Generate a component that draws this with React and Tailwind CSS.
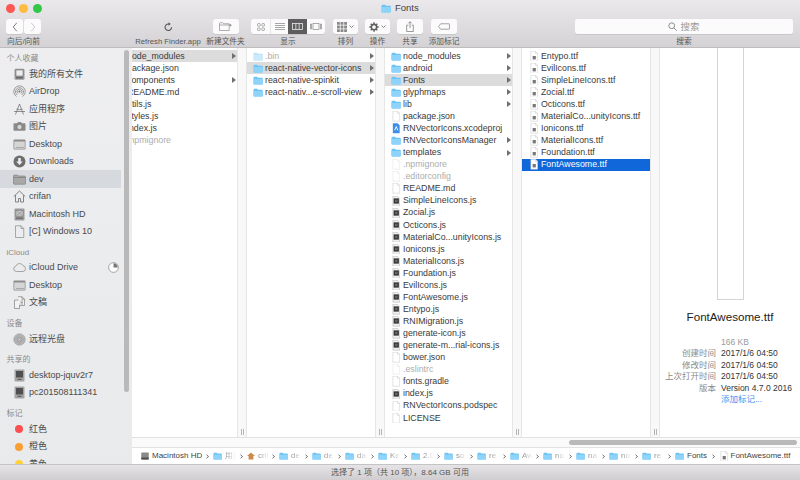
import React from 'react';

const FONT = "font-['Liberation_Sans','Noto_Sans_CJK_SC',sans-serif]";

const Folder = ({ className = 'w-[10px] h-[9px]', dim }) => (
  <svg viewBox="0 0 20 17" className={className} style={{ opacity: dim ? 0.45 : 1 }}>
    <path d="M1 3q0-2 2-2h5l2 2h8q1.500 0 1.500 1.500V15q0 1.500-1.500 1.500H2.500Q1 16.500 1 15z" fill="#6cc3f5" />
    <path d="M1 5.500h18.500V15q0 1.500-1.500 1.500H2.500Q1 16.500 1 15z" fill="#8ed4fa" />
  </svg>
);

const Doc = ({ dim, children }) => (
  <svg viewBox="0 0 16 20" className="w-[8.500px] h-[10.500px]" style={{ opacity: dim ? 0.5 : 1 }}>
    <path d="M1.500 0.500h9l4 4v15h-13z" fill="#fff" stroke="#c9c9c9" />
    <path d="M10.500 0.500v4h4" fill="none" stroke="#c9c9c9" />
    {children}
  </svg>
);

const JsFile = () => (
  <svg viewBox="0 0 16 20" className="w-[8.500px] h-[10.500px]">
    <path d="M1.500 0.500h9l4 4v15h-13z" fill="#f0f0f0" stroke="#b5b5b5" />
    <rect x="3" y="4.500" width="10" height="10" fill="#333" />
    <rect x="5.500" y="7" width="5" height="5" fill="#666" />
  </svg>
);

const TtfFile = () => (
  <Doc>
    <rect x="5" y="9.500" width="6" height="6.500" fill="#777" />
  </Doc>
);

const Xcode = () => (
  <svg viewBox="0 0 16 20" className="w-[8.500px] h-[10.500px]">
    <path d="M1.500 0.500h9l4 4v15h-13z" fill="#3d8ee8" />
    <path d="M8 5l4 9h-1.800L8 9l-2.200 5H4z" fill="#fff" />
  </svg>
);

const Arrow = () => <span className="w-0 h-0 border-y-[3px] border-y-transparent border-l-[4px] border-l-[#6f6f6f]" />;

const Row = ({ name, kind, arrow, dim, selected, blue, pad = 'pl-1', cut }) => {
  const bg = blue ? 'bg-[#0f67d9]' : selected ? 'bg-[#dcdcdc]' : '';
  const color = blue ? 'text-white' : dim ? 'text-[#adadad]' : 'text-[#3a3a3a]';
  return (
    <div className={`h-[12.07px] flex items-center ${pad} pr-[1.500px] ${bg}`}>
      {!cut && (
        <span className="w-[14px] flex justify-center shrink-0">
          {kind === 'folder' && <Folder dim={dim} />}
          {kind === 'doc' && <Doc dim={dim} />}
          {kind === 'js' && <JsFile />}
          {kind === 'ttf' && <TtfFile />}
          {kind === 'xcode' && <Xcode />}
        </span>
      )}
      <span className={`flex-1 min-w-0 whitespace-nowrap text-[8.800px] leading-none ${cut ? '-ml-[5px]' : ''} ${color}`}>{name}</span>
      {arrow && <Arrow />}
    </div>
  );
};

const Gutter = () => (
  <div className="w-[10px] shrink-0 bg-[#f8f8f8] border-x border-[#e6e6e6] flex items-end justify-center pb-[2px]">
    <span className="w-[3px] h-[6px] border-x border-[#b5b5b5]" />
  </div>
);

const col3 = [
  ['node_modules', 'folder', 1], ['android', 'folder', 1], ['Fonts', 'folder', 1, 0, 1], ['glyphmaps', 'folder', 1], ['lib', 'folder', 1],
  ['package.json', 'doc'], ['RNVectorIcons.xcodeproj', 'xcode'], ['RNVectorIconsManager', 'folder', 1], ['templates', 'folder', 1],
  ['.npmignore', 'doc', 0, 1], ['.editorconfig', 'doc', 0, 1], ['README.md', 'doc'], ['SimpleLineIcons.js', 'js'], ['Zocial.js', 'js'],
  ['Octicons.js', 'js'], ['MaterialCo...unityIcons.js', 'js'], ['Ionicons.js', 'js'], ['MaterialIcons.js', 'js'], ['Foundation.js', 'js'],
  ['EvilIcons.js', 'js'], ['FontAwesome.js', 'js'], ['Entypo.js', 'js'], ['RNIMigration.js', 'js'], ['generate-icon.js', 'js'],
  ['generate-m...rial-icons.js', 'js'], ['bower.json', 'doc'], ['.eslintrc', 'doc', 0, 1], ['fonts.gradle', 'doc'], ['index.js', 'js'],
  ['RNVectorIcons.podspec', 'doc'], ['LICENSE', 'doc'],
];

const col4 = ['Entypo.ttf', 'EvilIcons.ttf', 'SimpleLineIcons.ttf', 'Zocial.ttf', 'Octicons.ttf', 'MaterialCo...unityIcons.ttf', 'Ionicons.ttf', 'MaterialIcons.ttf', 'Foundation.ttf'];

const G = '#7f7f7f';

const sidebarIcons = {
  all: (
    <svg viewBox="0 0 26 26" className="w-[13px] h-[13px]">
      <rect x="3" y="1.500" width="20" height="22" rx="2.500" fill="#9a9a9a" />
      <rect x="6" y="4" width="14" height="12" fill="#ececec" stroke="#666" />
      <rect x="6" y="18" width="14" height="3" fill="#666" />
    </svg>
  ),
  airdrop: (
    <svg viewBox="0 0 26 26" className="w-[13px] h-[13px]" fill="none" stroke={G} strokeWidth="1.500">
      <path d="M7 23A11.500 11.500 0 1 1 19 23" />
      <path d="M8.500 20A8 8 0 1 1 17.500 20" />
      <path d="M10 17A4.800 4.800 0 1 1 16 17" />
      <circle cx="13" cy="13" r="1.500" fill={G} />
    </svg>
  ),
  apps: (
    <svg viewBox="0 0 26 26" className="w-[13px] h-[13px]" fill="none" stroke="#707070" strokeWidth="1.500">
      <path d="M13 2L5 23M13 2l8 21M2 17h22M7 12q6 3 12 0" />
    </svg>
  ),
  photos: (
    <svg viewBox="0 0 26 26" className="w-[13px] h-[13px]">
      <path d="M1 8q0-1.500 1.500-1.500H8L10 4h6l2 2.500h5.500Q25 6.500 25 8v12q0 1.500-1.500 1.500h-21Q1 21.500 1 20z" fill="#8a8a8a" />
      <circle cx="13" cy="14" r="5" fill="#d8d8d8" stroke="#666" />
    </svg>
  ),
  desktop: (
    <svg viewBox="0 0 26 26" className="w-[13px] h-[13px]">
      <rect x="1" y="3" width="24" height="20" rx="2" fill="#8c8c8c" />
      <rect x="2.500" y="7" width="21" height="14.500" fill="#d5d5d5" />
      <path d="M7 19h2M11 19h2M15 19h2M19 19h2" stroke="#666" strokeWidth="1.500" />
    </svg>
  ),
  downloads: (
    <svg viewBox="0 0 26 26" className="w-[13px] h-[13px]">
      <circle cx="13" cy="13" r="12" fill="#6e6e6e" />
      <path d="M10.500 6h5v7h4L13 20l-6.500-7h4z" fill="#f0f0f0" />
    </svg>
  ),
  folder: (
    <svg viewBox="0 0 26 26" className="w-[13px] h-[13px]">
      <path d="M1 6q0-2 2-2h6l2 2h12q2 0 2 2v13q0 1.500-1.500 1.500h-21Q1 22.500 1 21z" fill="#a8a8a8" stroke="#6a6a6a" />
      <path d="M1.500 9h23" stroke="#6a6a6a" />
    </svg>
  ),
  home: (
    <svg viewBox="0 0 26 26" className="w-[13px] h-[13px]" fill="none" stroke="#6a6a6a" strokeWidth="1.600">
      <path d="M1.500 13L13 2l11.500 11M5 10.500V24h6v-7h4v7h6V10.500" />
    </svg>
  ),
  hd: (
    <svg viewBox="0 0 26 26" className="w-[13px] h-[13px]">
      <rect x="3" y="1" width="20" height="24" rx="2" fill="#9c9c9c" />
      <rect x="6" y="5" width="14" height="11" fill="#c9c9c9" stroke="#777" />
      <path d="M8 7l10 7M18 7L8 14" stroke="#777" />
      <rect x="6" y="19" width="14" height="3" fill="#6f6f6f" />
    </svg>
  ),
  doc: (
    <svg viewBox="0 0 26 26" className="w-[13px] h-[13px]" fill="none" stroke="#8a8a8a" strokeWidth="1.400">
      <path d="M5 1.500h11l5.500 5.500v18H5zM16 1.500V7h5.500" />
    </svg>
  ),
  cloud: (
    <svg viewBox="0 0 26 26" className="w-[13px] h-[13px]">
      <path d="M7 21a5.500 5.500 0 0 1-1-10.900A7.500 7.500 0 0 1 20 9.500 5.800 5.800 0 0 1 20 21z" fill="#ececec" stroke="#7f7f7f" strokeWidth="1.300" />
    </svg>
  ),
  docs: (
    <svg viewBox="0 0 26 26" className="w-[13px] h-[13px]" fill="none" stroke="#808080" strokeWidth="1.400">
      <path d="M3 8h10v17H3z" fill="#f2f2f2" />
      <path d="M10 1.500h8l5 5V19h-10M18 1.500v5h5" fill="#f2f2f2" />
      <path d="M15 10h5M15 13h5M15 16h5" />
    </svg>
  ),
  disc: (
    <svg viewBox="0 0 26 26" className="w-[13px] h-[13px]" fill="none">
      <circle cx="13" cy="13" r="11.500" fill="#b8b8b8" stroke="#8d8d8d" />
      <circle cx="13" cy="13" r="8" stroke="#9c9c9c" />
      <circle cx="13" cy="13" r="5" stroke="#8d8d8d" />
      <circle cx="13" cy="13" r="2" fill="#eee" stroke="#777" />
    </svg>
  ),
  monitor: (
    <svg viewBox="0 0 26 26" className="w-[13px] h-[13px]">
      <rect x="3" y="1" width="20" height="24" rx="2" fill="#a4a4a4" />
      <rect x="6" y="4" width="14" height="13" fill="#4f4f4f" />
      <rect x="9" y="19.500" width="8" height="2.500" fill="#5f5f5f" />
    </svg>
  ),
};

const SideHead = ({ children, first }) => (
  <div className={`${first ? 'mt-[4.500px]' : 'mt-[6px]'} h-[12.750px] pl-[6.500px] flex items-center text-[8px] leading-none text-[#8a8a8a]`}>{children}</div>
);

const SideItem = ({ icon, label, active, tag, right }) => (
  <div className={`h-[17.500px] w-[121px] flex items-center pl-[12px] text-[9px] leading-none text-[#4a4a4a] whitespace-nowrap ${active ? 'bg-[#d6d9de]' : ''}`}>
    <span className="w-[14px] h-[13px] flex items-center justify-center shrink-0">
      {tag ? <span className={`w-[8px] h-[8px] rounded-full ${tag}`} /> : sidebarIcons[icon]}
    </span>
    <span className="ml-[3px] flex-1">{label}</span>
    {right}
  </div>
);

const Btn = ({ className = '', children }) => (
  <div className={`h-[15px] rounded-[2.500px] bg-[#fbfbfb] shadow-[0_0.5px_0.5px_#b5b5b5] flex items-center justify-center ${className}`}>{children}</div>
);

const ToolItem = ({ w, ml, label, children }) => (
  <div className={`flex flex-col items-center shrink-0 ${w} ${ml}`}>
    {children}
    <div className="mt-[3px] text-[7.700px] leading-[10px] text-[#555] whitespace-nowrap">{label}</div>
  </div>
);

const Chevron = ({ dir, color }) => (
  <svg viewBox="0 0 10 16" className="w-[6px] h-[10px]" fill="none" stroke={color} strokeWidth="1.500">
    <path d={dir === 'left' ? 'M8 1L2 8l6 7' : 'M2 1l6 7-6 7'} />
  </svg>
);

const SmallDown = () => (
  <svg viewBox="0 0 10 6" className="w-[5px] h-[3px] ml-[2px]" fill="none" stroke="#555" strokeWidth="1.400">
    <path d="M1 1l4 4 4-4" />
  </svg>
);

const Toolbar = () => (
  <div className="h-[48px] shrink-0 bg-gradient-to-b from-[#ebe9eb] to-[#d4d2d4] border-b border-[#bdbdbd]">
    <div className="relative h-[16px]">
      <div className="absolute left-[5.500px] top-[3.500px] flex gap-[4.500px]">
        <span className="w-[9px] h-[9px] rounded-full bg-[#fc5753]" />
        <span className="w-[9px] h-[9px] rounded-full bg-[#fdbc40]" />
        <span className="w-[9px] h-[9px] rounded-full bg-[#33c748]" />
      </div>
      <div className="pl-[381px] h-full flex items-center gap-[4px] text-[9.500px] leading-none text-[#444]">
        <Folder className="w-[10px] h-[9px]" />
        <span>Fonts</span>
      </div>
    </div>
    <div className="flex pt-[3px] pl-[6px]">
      <ToolItem w="w-[35px]" label="向后/向前">
        <div className="flex gap-[1px]">
          <Btn className="w-[17px]"><Chevron dir="left" color="#6f6f6f" /></Btn>
          <Btn className="w-[17px]"><Chevron dir="right" color="#c4c4c4" /></Btn>
        </div>
      </ToolItem>
      <ToolItem w="w-[66px]" ml="ml-[94px]" label="Refresh Finder.app">
        <div className="h-[15px] flex items-center">
          <svg viewBox="0 0 16 16" className="w-[9px] h-[9px]" fill="none" stroke="#555" strokeWidth="2">
            <path d="M13.500 9.500A5.800 5.800 0 1 1 8 3.500h2" />
            <path d="M8 0.500l4 3-4 3z" fill="#555" stroke="none" />
          </svg>
        </div>
      </ToolItem>
      <ToolItem w="w-[37px]" ml="ml-[6px]" label="新建文件夹">
        <Btn className="w-[26px]">
          <svg viewBox="0 0 26 18" className="w-[13px] h-[9px]" fill="none" stroke="#7a7a7a" strokeWidth="1.200">
            <path d="M1 3q0-1.500 1.500-1.500h5l2 2h11V17H1zM1 6h19.500M23 4v5M20.500 6.500h5" />
          </svg>
        </Btn>
      </ToolItem>
      <ToolItem w="w-[74px]" ml="ml-[7px]" label="显示">
        <div className="flex h-[15px] rounded-[2.500px] overflow-hidden bg-[#fbfbfb] shadow-[0_0.5px_0.5px_#b5b5b5]">
          <div className="w-[19px] flex items-center justify-center">
            <svg viewBox="0 0 14 14" className="w-[8px] h-[8px]" fill="none" stroke="#777">
              <rect x="1" y="1" width="4.500" height="4.500" rx="1" />
              <rect x="8.500" y="1" width="4.500" height="4.500" rx="1" />
              <rect x="1" y="8.500" width="4.500" height="4.500" rx="1" />
              <rect x="8.500" y="8.500" width="4.500" height="4.500" rx="1" />
            </svg>
          </div>
          <div className="w-[18px] flex items-center justify-center border-l border-[#e6e6e6]">
            <svg viewBox="0 0 20 14" className="w-[10px] h-[7px]" stroke="#777" strokeWidth="1.300">
              <path d="M0 1h20M0 5h20M0 9h20M0 13h20" />
            </svg>
          </div>
          <div className="w-[19px] flex items-center justify-center bg-[#5e5e5e]">
            <svg viewBox="0 0 22 14" className="w-[11px] h-[7px]" fill="none" stroke="#f4f4f4" strokeWidth="1.500">
              <rect x="1" y="1" width="20" height="12" />
              <path d="M7.700 1v12M14.300 1v12" />
            </svg>
          </div>
          <div className="w-[18px] flex items-center justify-center">
            <svg viewBox="0 0 24 14" className="w-[12px] h-[7px]" fill="none" stroke="#888" strokeWidth="1.400">
              <rect x="6" y="1" width="12" height="12" />
              <path d="M1 2v10h2V2zM21 2v10h2V2z" />
            </svg>
          </div>
        </div>
      </ToolItem>
      <ToolItem w="w-[25px]" ml="ml-[8px]" label="排列">
        <Btn className="w-[25px]">
          <svg viewBox="0 0 14 14" className="w-[10px] h-[10px]" fill="#8a8a8a">
            <path d="M0 0h4v4H0zM5 0h4v4H5zM10 0h4v4h-4zM0 5h4v4H0zM5 5h4v4H5zM10 5h4v4h-4zM0 10h4v4H0zM5 10h4v4H5zM10 10h4v4h-4z" />
          </svg>
          <SmallDown />
        </Btn>
      </ToolItem>
      <ToolItem w="w-[25px]" ml="ml-[7px]" label="操作">
        <Btn className="w-[25px]">
          <svg viewBox="0 0 16 16" className="w-[10px] h-[10px]">
            <circle cx="8" cy="8" r="4.300" fill="none" stroke="#606060" strokeWidth="2.600" />
            <path d="M8 0.500v3M8 12.500v3M0.500 8h3M12.500 8h3M2.700 2.700l2.100 2.100M11.200 11.200l2.100 2.100M2.700 13.300l2.100-2.100M11.200 4.800l2.100-2.100" stroke="#606060" strokeWidth="2.200" />
          </svg>
          <SmallDown />
        </Btn>
      </ToolItem>
      <ToolItem w="w-[26px]" ml="ml-[7px]" label="共享">
        <Btn className="w-[26px]">
          <svg viewBox="0 0 12 16" className="w-[8px] h-[11px]" fill="none" stroke="#777" strokeWidth="1.100">
            <path d="M3.500 6H1v9.500h10V6H8.500M6 10.500V1M3.500 3.300L6 0.800l2.500 2.500" />
          </svg>
        </Btn>
      </ToolItem>
      <ToolItem w="w-[30px]" ml="ml-[6px]" label="添加标记">
        <Btn className="w-[26px]">
          <svg viewBox="0 0 22 12" className="w-[12px] h-[7px]" fill="none" stroke="#777" strokeWidth="1.200">
            <path d="M5 1h15q1 0 1 1v8q0 1-1 1H5L1 6z" />
          </svg>
        </Btn>
      </ToolItem>
      <ToolItem w="w-[218px]" ml="ml-[116px]" label="搜索">
        <Btn className="w-[218px] text-[9.500px] text-[#9a9a9a] leading-none gap-[3px]">
          <svg viewBox="0 0 14 14" className="w-[9px] h-[9px]" fill="none" stroke="#777" strokeWidth="1.300">
            <circle cx="5.800" cy="5.800" r="4.500" />
            <path d="M9 9l4.500 4.500" />
          </svg>
          <span>搜索</span>
        </Btn>
      </ToolItem>
    </div>
  </div>
);

const Sidebar = () => (
  <div className="relative w-[132px] shrink-0 overflow-hidden bg-gradient-to-b from-[#eeeef0] to-[#e8eaec]">
    <SideHead first>个人收藏</SideHead>
    <SideItem icon="all" label="我的所有文件" />
    <SideItem icon="airdrop" label="AirDrop" />
    <SideItem icon="apps" label="应用程序" />
    <SideItem icon="photos" label="图片" />
    <SideItem icon="desktop" label="Desktop" />
    <SideItem icon="downloads" label="Downloads" />
    <SideItem icon="folder" label="dev" active />
    <SideItem icon="home" label="crifan" />
    <SideItem icon="hd" label="Macintosh HD" />
    <SideItem icon="doc" label="[C] Windows 10" />
    <SideHead>iCloud</SideHead>
    <SideItem
      icon="cloud"
      label="iCloud Drive"
      right={
        <svg viewBox="0 0 12 12" className="w-[11px] h-[11px] mr-[2px]">
          <circle cx="6" cy="6" r="5.300" fill="#fff" stroke="#777" strokeWidth="0.700" />
          <path d="M6 6V1.400A4.600 4.600 0 0 1 10.600 6z" fill="#777" />
        </svg>
      }
    />
    <SideItem icon="desktop" label="Desktop" />
    <SideItem icon="docs" label="文稿" />
    <SideHead>设备</SideHead>
    <SideItem icon="disc" label="远程光盘" />
    <SideHead>共享的</SideHead>
    <SideItem icon="monitor" label="desktop-jquv2r7" />
    <SideItem icon="monitor" label="pc201508111341" />
    <SideHead>标记</SideHead>
    <SideItem tag="bg-[#fb4f50]" label="红色" />
    <SideItem tag="bg-[#fb9f33]" label="橙色" />
    <SideItem tag="bg-[#fdd23a]" label="黄色" />
    {/* overlay scrollbar */}
    <div className="absolute left-[124px] top-[2px] w-[5px] h-[342px] rounded-full bg-[#b9b9b9]" />
  </div>
);

const Meta = ({ label, value, muted }) => (
  <div className="flex h-[11.600px] items-center text-[8.500px] leading-none whitespace-nowrap">
    <span className="w-[61px] pr-[5px] text-right text-[#8a8a8a]">{label}</span>
    <span className={muted ? 'text-[#9a9a9a]' : 'text-[#333]'}>{value}</span>
  </div>
);

const Preview = () => (
  <div className="flex-1 bg-white flex flex-col overflow-hidden">
    <div className="self-center w-[27px] h-[252px] shrink-0 bg-white border-x border-b border-[#d4d4d4]" />
    <div className="mt-[9px] text-center text-[11.600px] leading-[15px] text-[#222]">FontAwesome.ttf</div>
    <div className="mt-[12px]">
      <Meta value="166 KB" muted />
      <Meta label="创建时间" value="2017/1/6 04:50" />
      <Meta label="修改时间" value="2017/1/6 04:50" />
      <Meta label="上次打开时间" value="2017/1/6 04:50" />
      <Meta label="版本" value="Version 4.7.0 2016" />
      <div className="pl-[61px] text-[8.500px] leading-[11.600px] text-[#4a90ee]">添加标记...</div>
    </div>
  </div>
);

const crumbs = ['de', 'de', 'da', 'Ke', '2.0', 'so', 're', 'Aw', 'no', 'na', 'no', 're'];

const Sep = () => (
  <svg viewBox="0 0 6 8" className="w-[3px] h-[5px] shrink-0" fill="none" stroke="#444" strokeWidth="1.500">
    <path d="M1 0.500L5 4 1 7.500" />
  </svg>
);

const Faded = ({ children, w = 'w-[11px]' }) => (
  <span className={`ml-[3px] ${w} overflow-hidden text-[#888] [mask-image:linear-gradient(to_right,black,transparent)]`}>{children}</span>
);

const PathBar = () => (
  <div className="h-[16px] shrink-0 bg-white flex items-center pl-[9px] text-[8px] leading-none text-[#444] whitespace-nowrap">
    <svg viewBox="0 0 16 16" className="w-[8px] h-[8px] shrink-0">
      <rect x="0.500" y="1" width="15" height="14" rx="1.500" fill="#8a8a8a" />
      <rect x="0.500" y="11" width="15" height="4" fill="#4d4d4d" />
    </svg>
    <span className="ml-[3px] w-[49px]">Macintosh HD</span>
    <span className="w-[12px] flex justify-center"><Sep /></span>
    <span className="w-[27px] shrink-0 flex items-center">
      <Folder className="w-[9px] h-[8px] shrink-0" />
      <Faded>用户</Faded>
    </span>
    <span className="w-[32px] shrink-0 flex items-center">
      <Sep />
      <svg viewBox="0 0 10 10" className="w-[8px] h-[8px] ml-[4px] shrink-0">
        <path d="M5 0.500L10 5H8v4.500H2V5H0z" fill="#c98a4a" />
      </svg>
      <Faded>crifan</Faded>
    </span>
    {crumbs.map((c, i) => (
      <span key={i} className="w-[33px] shrink-0 flex items-center">
        <Sep />
        <Folder className="w-[9px] h-[8px] shrink-0 ml-[4px]" />
        <Faded>{c}</Faded>
      </span>
    ))}
    <span className="flex items-center shrink-0">
      <Sep />
      <Folder className="w-[9px] h-[8px] shrink-0 ml-[4px]" />
      <span className="ml-[3px]">Fonts</span>
    </span>
    <span className="ml-[5px] flex shrink-0"><Sep /></span>
    <span className="ml-[5px] flex shrink-0"><TtfFile /></span>
    <span className="ml-[2px]">FontAwesome.ttf</span>
  </div>
);

export default function App() {
  return (
    <div className={`w-[800px] h-[480px] flex flex-col overflow-hidden bg-[#e8eaec] ${FONT}`}>
      <Toolbar />
      <div className="flex-1 min-h-0 flex">
        <Sidebar />
        <div className="flex-1 min-w-0 flex flex-col">
          <div className="flex-1 min-h-0 flex bg-white">
            <div className="w-[105px] shrink-0 pt-[2px] overflow-hidden">
              <Row cut pad="pl-0" name="node_modules" arrow selected />
              <Row cut pad="pl-0" name="package.json" />
              <Row cut pad="pl-0" name="components" arrow />
              <Row cut pad="pl-0" name="README.md" />
              <Row cut pad="pl-0" name="utils.js" />
              <Row cut pad="pl-0" name="styles.js" />
              <Row cut pad="pl-0" name="index.js" />
              <Row cut pad="pl-0" name=".npmignore" dim />
            </div>
            <Gutter />
            <div className="w-[128px] shrink-0 pt-[2px] overflow-hidden">
              <Row name=".bin" kind="folder" arrow dim />
              <Row name="react-native-vector-icons" kind="folder" arrow selected />
              <Row name="react-native-spinkit" kind="folder" arrow />
              <Row name="react-nativ...e-scroll-view" kind="folder" arrow />
            </div>
            <Gutter />
            <div className="w-[127px] shrink-0 pt-[2px] overflow-hidden">
              {col3.map(([name, kind, arrow, dim, sel]) => (
                <Row key={name} name={name} kind={kind} arrow={!!arrow} dim={!!dim} selected={!!sel} />
              ))}
            </div>
            <Gutter />
            <div className="w-[128px] shrink-0 pt-[2px] overflow-hidden">
              {col4.map((name) => (
                <Row key={name} name={name} kind="ttf" pad="pl-[5px]" />
              ))}
              <Row name="FontAwesome.ttf" kind="ttf" blue pad="pl-[5px]" />
            </div>
            <Gutter />
            <Preview />
          </div>
          <div className="h-[11px] shrink-0 bg-[#fafafa] border-y border-[#e2e2e2] flex items-center justify-end pr-[3px]">
            <div className="w-[228px] h-[5px] rounded-full bg-[#b9b9b9]" />
          </div>
          <PathBar />
        </div>
      </div>
      <div className="h-[16px] shrink-0 bg-gradient-to-b from-[#e6e4e6] to-[#cfcdcf] border-t border-[#c4c4c4] flex items-center justify-center text-[8px] leading-none text-[#555]">
        <span>选择了 1 项（共 10 项），8.64 GB 可用</span>
      </div>
    </div>
  );
}
